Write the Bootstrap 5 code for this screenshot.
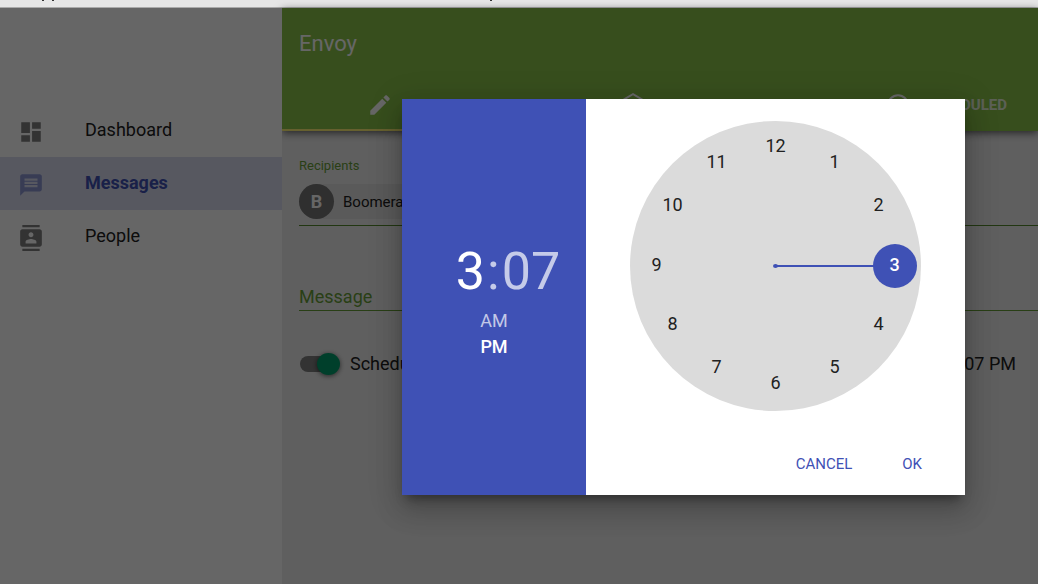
<!DOCTYPE html>
<html lang="en">
<head>
<meta charset="utf-8">
<meta name="viewport" content="width=device-width, initial-scale=1">
<title>Envoy</title>
<link href="https://cdn.jsdelivr.net/npm/bootstrap@5.3.0/dist/css/bootstrap.min.css" rel="stylesheet">
<style>
body{font-family:Roboto,sans-serif;font-size:18px;line-height:24px;color:#212121;background:#e6e6e6}
button{font-family:inherit}
.window-strip{height:8px;background:#e6e6e6;border-bottom:1px solid #aaa}
.tick{position:absolute;top:0;width:2px;height:1px;background:#333}
.app-shell{min-height:calc(100vh - 8px);background:#eee}
.drawer{width:282px;padding-top:96px;background:#fff;z-index:1}
.drawer-link{height:53px;padding-left:18px;gap:41px;color:#212121;text-decoration:none}
.drawer-link span{padding-bottom:2px}
.drawer-link svg{width:26px;height:26px;fill:#808080;margin-top:2px}
.drawer-link.active{background:#d9dcf0;color:#3f51b5;font-weight:700}
.drawer-link.active svg{fill:#8c97d3}
.app-header{background:#8bc34a;color:#fff;box-shadow:0 2px 8px rgba(0,0,0,.6)}
.app-title{font-size:22px;line-height:28px;padding:22px 17px 20px;font-weight:400}
.tab-btn{height:53px;gap:12px;padding-top:4px;border:0;border-bottom:2px solid transparent;background:none;color:#fff;font-size:15px;font-weight:700;line-height:20px}
.tab-btn svg{width:26px;height:26px;fill:#fff}
.tab-btn:not(.active){color:rgba(255,255,255,.8)}
.tab-btn.active{border-color:#fff176}
.tab-drafts{padding-left:20px}
.tab-scheduled{padding-right:31px}
.compose{padding:26px 0 0 17px}
.field-label{color:#689f38}
.recipients{font-size:13px;line-height:18px}
.field-line{border-bottom:1px solid #558b2f;padding:9px 0 6px}
.person-chip{height:35px;border-radius:18px;background:#e0e0e0;font-size:15px;gap:9px;padding-right:14px}
.avatar-dot{width:35px;height:35px;border-radius:50%;background:#757575;color:#fff;font-size:18px;font-weight:700}
.message-box{border:0;border-bottom:1px solid #689f38;background:none;width:100%;height:27px;margin-top:58px;padding:0 0 1px;display:block}
.message-box::placeholder{color:#689f38;opacity:1}
.schedule-row{margin-top:41px;padding:0 22px 0 1px;gap:10px}
.switch-input{appearance:none;width:40px;height:16px;margin:0;border-radius:8px;background:linear-gradient(#808080,#808080) 0 0/36px 16px no-repeat;position:relative}
.switch-input::after{content:"";position:absolute;right:0;top:-3px;width:23px;height:22px;border-radius:50%;background:#009f6b;box-shadow:0 1px 5px rgba(0,0,0,.6)}
.backdrop-layer{background:rgba(0,0,0,.6);padding:2px 0 0 329px}
.time-dialog{width:563px;background:#fff;box-shadow:0 16px 24px 2px rgba(0,0,0,.14),0 6px 30px 5px rgba(0,0,0,.12),0 8px 10px -5px rgba(0,0,0,.4)}
.time-side{width:184px;background:#3f51b5;padding-top:8px}
.time-side button{border:0;background:none;padding:0;color:rgba(255,255,255,.7)}
.time-side button.chosen{color:#fff}
.clock-text{font-size:52px;line-height:60px;color:rgba(255,255,255,.7);padding-left:28px;gap:2px}
.period{font-size:18px;line-height:26px;padding-top:6px}
.period .chosen{font-weight:500}
.dial{width:291px;height:290px;border-radius:50%;background:#dbdbdb;margin:22px auto 0}
.dial button{position:absolute;left:calc(50% + var(--x));top:calc(50% + var(--y));width:44px;height:44px;margin:-22px;border:0;border-radius:50%;background:none;padding:0 0 2px;color:#212121;font-size:18px;line-height:24px}
.dial .chosen{background:#3f51b5;color:#fff;font-weight:500}
.hand{position:absolute;left:50%;top:50%;width:100px;height:2px;margin-top:-1px;background:#3f51b5}
.hand::before{content:"";position:absolute;left:-3px;top:-1px;width:5px;height:4px;border-radius:50%;background:#3f51b5}
.actions{gap:22px;padding:33px 29px 11px}
.actions button{border:0;background:none;color:#3f51b5;font-size:15px;line-height:20px;padding:10px 14px}
</style>
</head>
<body>
<div class="window-strip position-relative overflow-hidden">
  <span class="tick" style="left:42px"></span><span class="tick" style="left:52px"></span><span class="tick" style="left:490px"></span>
</div>
<div class="app-shell d-flex position-relative">
  <nav class="drawer flex-shrink-0">
    <a href="#" class="drawer-link d-flex align-items-center"><svg viewBox="0 0 24 24"><path d="M3 13h8V3H3v10zm0 8h8v-6H3v6zm10 0h8V11h-8v10zm0-18v6h8V3h-8z"/></svg><span>Dashboard</span></a>
    <a href="#" class="drawer-link active d-flex align-items-center"><svg viewBox="0 0 24 24"><path d="M20 2H4c-1.1 0-1.99.9-1.99 2L2 22l4-4h14c1.100 0 2-.9 2-2V4c0-1.100-.9-2-2-2zM6 9h12v2H6V9zm12 5H6v-2h12v2zm0-6H6V6h12v2z"/></svg><span>Messages</span></a>
    <a href="#" class="drawer-link d-flex align-items-center"><svg viewBox="0 0 24 24"><path d="M20 0H4v2h16V0zM4 24h16v-2H4v2zM20 4H4c-1.100 0-2 .9-2 2v12c0 1.100.9 2 2 2h16c1.100 0 2-.9 2-2V6c0-1.100-.9-2-2-2zm-8 2.750c1.240 0 2.250 1.010 2.250 2.250s-1.010 2.250-2.250 2.250S9.750 10.240 9.750 9 10.760 6.750 12 6.750zM17 17H7v-1.500c0-1.670 3.330-2.500 5-2.500s5 .83 5 2.500V17z"/></svg><span>People</span></a>
  </nav>
  <div class="flex-grow-1">
    <header class="app-header">
      <h1 class="app-title m-0">Envoy</h1>
      <div class="d-flex">
        <button class="tab-btn active d-flex align-items-center justify-content-center col-4"><svg viewBox="0 0 24 24"><path d="M3 17.250V21h3.750L17.810 9.940l-3.750-3.750L3 17.250zM20.710 7.040c.39-.39.39-1.020 0-1.410l-2.340-2.340c-.39-.39-1.020-.39-1.410 0l-1.830 1.830 3.750 3.750 1.830-1.830z"/></svg>WRITE</button>
        <button class="tab-btn tab-drafts d-flex align-items-center justify-content-center col-4"><svg viewBox="0 0 24 24"><path d="M21.990 8c0-.72-.37-1.350-.94-1.700L12 1 2.950 6.300C2.380 6.650 2 7.280 2 8v10c0 1.100.9 2 2 2h16c1.100 0 2-.9 2-2l-.01-10zM12 13L3.740 7.840 12 3l8.260 4.840L12 13z"/></svg>DRAFTS</button>
        <button class="tab-btn tab-scheduled d-flex align-items-center justify-content-end col-4"><svg viewBox="0 0 24 24"><path d="M12 2a10 10 0 1 0 0 20 10 10 0 0 0 0-20zm0 18a8 8 0 1 1 0-16 8 8 0 0 1 0 16zm.5-13H11v6l5.200 3.200.8-1.300-4.500-2.700z"/></svg>SCHEDULED</button>
      </div>
    </header>
    <main class="compose">
      <div class="field-label recipients">Recipients</div>
      <div class="field-line d-flex">
        <div class="person-chip d-flex align-items-center"><span class="avatar-dot d-flex align-items-center justify-content-center">B</span>Boomerang</div>
      </div>
      <input class="message-box" aria-label="Message" placeholder="Message">
      <div class="schedule-row d-flex align-items-center">
        <input class="switch-input" type="checkbox" role="switch" id="schedule" checked>
        <label for="schedule">Schedule</label>
        <span class="ms-auto">3:07 PM</span>
      </div>
    </main>
  </div>
  <div class="backdrop-layer position-absolute top-0 start-0 w-100 h-100 d-flex align-items-center justify-content-center z-2">
    <section class="time-dialog d-flex flex-shrink-0" role="dialog" aria-label="Choose time">
      <div class="time-side d-flex flex-column align-items-center justify-content-center">
        <div class="clock-text d-flex"><button class="chosen">3</button><span>:</span><button>07</button></div>
        <div class="period d-flex flex-column"><button>AM</button><button class="chosen">PM</button></div>
      </div>
      <div class="flex-grow-1">
        <div class="dial position-relative">
          <div class="hand"></div>
          <button style="--x:0px;--y:-119px">12</button>
          <button style="--x:59px;--y:-103px">1</button>
          <button style="--x:103px;--y:-60px">2</button>
          <button class="chosen" style="--x:119px;--y:0px">3</button>
          <button style="--x:103px;--y:59px">4</button>
          <button style="--x:59px;--y:102px">5</button>
          <button style="--x:0px;--y:118px">6</button>
          <button style="--x:-59px;--y:102px">7</button>
          <button style="--x:-103px;--y:59px">8</button>
          <button style="--x:-119px;--y:0px">9</button>
          <button style="--x:-103px;--y:-60px">10</button>
          <button style="--x:-59px;--y:-103px">11</button>
        </div>
        <div class="actions d-flex justify-content-end"><button>CANCEL</button><button>OK</button></div>
      </div>
    </section>
  </div>
</div>
<script src="https://cdn.jsdelivr.net/npm/bootstrap@5.3.0/dist/js/bootstrap.bundle.min.js"></script>
</body>
</html>
